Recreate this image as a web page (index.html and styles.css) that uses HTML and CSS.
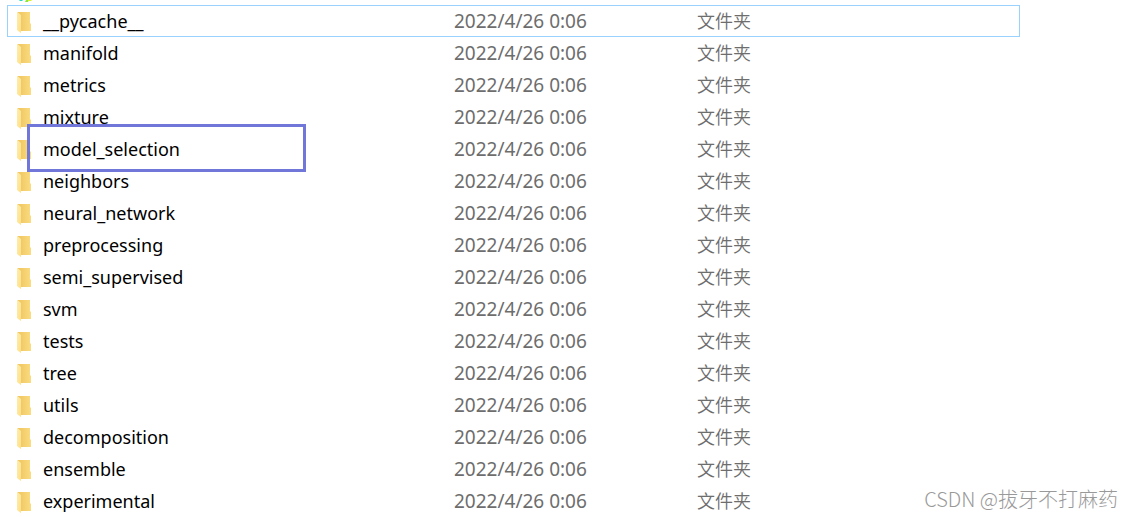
FILE: index.html
```html
<!DOCTYPE html>
<html lang="zh-CN">
<head>
<meta charset="utf-8">
<title>文件夹</title>
<link rel="stylesheet" href="styles.css">
</head>
<body>
<svg class="defs" aria-hidden="true">
  <defs>
    <linearGradient id="back" x1="0" y1="0" x2="1" y2="0"><stop offset="0.3" stop-color="#f1ca66"/><stop offset="1" stop-color="#fbdc82"/></linearGradient>
    <linearGradient id="flap" x1="0" y1="0" x2="1" y2="1"><stop offset="0" stop-color="#ffedac"/><stop offset="1" stop-color="#ffdf88"/></linearGradient>
    <symbol id="folder" viewBox="0 0 14 21">
      <path fill="url(#back)" d="M0 0H13V11L14 12V19H3V3Z"/>
      <path fill="url(#flap)" d="M0 0L4 3V21L0 18Z"/>
    </symbol>
  </defs>
</svg>
<main class="explorer">
  <svg class="cut-icon" viewBox="0 0 18 2" aria-hidden="true">
    <path fill="#27dcc0" d="M2 0H5L6 1H3Z"/><path fill="#8ce83c" d="M9 0H12L11 2H8Z"/><path fill="#d8f02e" d="M11 0H14L15 1H11Z"/>
  </svg>
  <table class="files">
    <colgroup><col class="col-name"><col class="col-date"><col></colgroup>
    <tbody>
      <tr class="focused"><td class="name"><svg class="folder"><use href="#folder"/></svg>__pycache__</td><td class="date">2022/4/26 0:06</td><td class="type">文件夹</td></tr>
      <tr><td class="name"><svg class="folder"><use href="#folder"/></svg>manifold</td><td class="date">2022/4/26 0:06</td><td class="type">文件夹</td></tr>
      <tr><td class="name"><svg class="folder"><use href="#folder"/></svg>metrics</td><td class="date">2022/4/26 0:06</td><td class="type">文件夹</td></tr>
      <tr><td class="name"><svg class="folder"><use href="#folder"/></svg>mixture</td><td class="date">2022/4/26 0:06</td><td class="type">文件夹</td></tr>
      <tr><td class="name marked"><svg class="folder"><use href="#folder"/></svg>model_selection</td><td class="date">2022/4/26 0:06</td><td class="type">文件夹</td></tr>
      <tr><td class="name"><svg class="folder"><use href="#folder"/></svg>neighbors</td><td class="date">2022/4/26 0:06</td><td class="type">文件夹</td></tr>
      <tr><td class="name"><svg class="folder"><use href="#folder"/></svg>neural_network</td><td class="date">2022/4/26 0:06</td><td class="type">文件夹</td></tr>
      <tr><td class="name"><svg class="folder"><use href="#folder"/></svg>preprocessing</td><td class="date">2022/4/26 0:06</td><td class="type">文件夹</td></tr>
      <tr><td class="name"><svg class="folder"><use href="#folder"/></svg>semi_supervised</td><td class="date">2022/4/26 0:06</td><td class="type">文件夹</td></tr>
      <tr><td class="name"><svg class="folder"><use href="#folder"/></svg>svm</td><td class="date">2022/4/26 0:06</td><td class="type">文件夹</td></tr>
      <tr><td class="name"><svg class="folder"><use href="#folder"/></svg>tests</td><td class="date">2022/4/26 0:06</td><td class="type">文件夹</td></tr>
      <tr><td class="name"><svg class="folder"><use href="#folder"/></svg>tree</td><td class="date">2022/4/26 0:06</td><td class="type">文件夹</td></tr>
      <tr><td class="name"><svg class="folder"><use href="#folder"/></svg>utils</td><td class="date">2022/4/26 0:06</td><td class="type">文件夹</td></tr>
      <tr><td class="name"><svg class="folder"><use href="#folder"/></svg>decomposition</td><td class="date">2022/4/26 0:06</td><td class="type">文件夹</td></tr>
      <tr><td class="name"><svg class="folder"><use href="#folder"/></svg>ensemble</td><td class="date">2022/4/26 0:06</td><td class="type">文件夹</td></tr>
      <tr><td class="name"><svg class="folder"><use href="#folder"/></svg>experimental</td><td class="date">2022/4/26 0:06</td><td class="type">文件夹</td></tr>
    </tbody>
  </table>
  <div class="watermark">CSDN @拔牙不打麻药</div>
</main>
</body>
</html>
```
FILE: styles.css
```css
body {
  margin: 0;
  background: #fff;
  color: #000;
  font-family: "Noto Sans", "Noto Sans CJK SC", sans-serif;
  font-size: 18px;
  line-height: 32px;
}

.defs {
  position: absolute;
  width: 0;
  height: 0;
}

.explorer {
  position: relative;
  padding: 0 113px 0 7px;
}

.cut-icon {
  display: block;
  width: 18px;
  height: 2px;
  margin: 0 0 3px 10px;
}

.files {
  width: 100%;
  table-layout: fixed;
  border-collapse: separate;
  border-spacing: 0;
}

.col-name {
  width: 447px;
}

.col-date {
  width: 243px;
}

.files td {
  height: 32px;
  padding: 0;
  white-space: nowrap;
}

.focused {
  outline: 1px solid #99d1ff;
  outline-offset: -1px;
}

.name {
  position: relative;
}

.folder {
  width: 14px;
  height: 21px;
  margin: 0 12px 2px 10px;
  vertical-align: middle;
}

.marked::after {
  content: "";
  position: absolute;
  top: -9px;
  left: 20px;
  box-sizing: border-box;
  width: 279px;
  height: 48px;
  border: 3px solid #7077d8;
}

.date,
.type {
  color: #6d6d6d;
}

.date {
  font-size: 19px;
}

.type {
  font-weight: 350;
}

.watermark {
  position: absolute;
  right: 15px;
  bottom: 2px;
  color: #999;
  font-family: "Noto Sans CJK SC", sans-serif;
  font-size: 20px;
  font-weight: 300;
  line-height: 32px;
}
```
